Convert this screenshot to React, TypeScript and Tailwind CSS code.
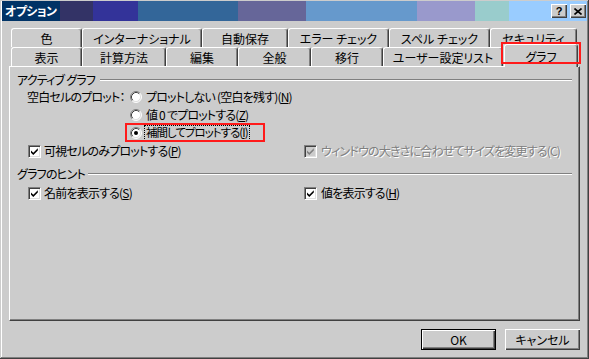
import React from "react";

const U = ({ c }: { c: string }) => <span className="underline underline-offset-1">{c}</span>;

function Radio({ checked }: { checked?: boolean }) {
  return (
    <svg width="12" height="12" viewBox="0 0 12 12" className="shrink-0">
      <circle cx="6" cy="6" r="5" fill="#ffffff" />
      <path d="M2.11 9.89 A5.5 5.5 0 0 1 9.89 2.11" stroke="#808080" fill="none" />
      <path d="M2.82 9.18 A4.5 4.5 0 0 1 9.18 2.82" stroke="#404040" fill="none" />
      <path d="M9.89 2.11 A5.5 5.5 0 0 1 2.11 9.89" stroke="#ffffff" fill="none" />
      <path d="M9.18 2.82 A4.5 4.5 0 0 1 2.82 9.18" stroke="#dfdfdf" fill="none" />
      {checked && <circle cx="6" cy="6" r="2" fill="#000000" />}
    </svg>
  );
}

function Check({ disabled }: { disabled?: boolean }) {
  return (
    <div
      className={
        "w-[13px] h-[13px] shrink-0 flex items-center justify-center border border-t-[#808080] border-l-[#808080] border-r-white border-b-white shadow-[inset_1px_1px_#404040,inset_-1px_-1px_#dfdfdf] " +
        (disabled ? "bg-[#cccccc]" : "bg-white")
      }
    >
      <svg width="9" height="9" viewBox="0 0 9 9">
        <polygon
          points="1,3.5 3.3,5.8 7.8,1.3 7.8,3.5 3.3,8 1,5.7"
          fill={disabled ? "#808080" : "#000000"}
        />
      </svg>
    </div>
  );
}

function Tab({ w, label }: { w: string; label: string }) {
  return (
    <div
      className={
        w +
        " h-full shrink-0 flex items-center justify-center border-l border-t border-white border-r border-r-[#404040] rounded-t-[3px] shadow-[inset_-1px_0_#808080] bg-[#cccccc]"
      }
    >
      <span className="pt-[1px]">{label}</span>
    </div>
  );
}

function GroupHeader({ label, mt, gap }: { label: string; mt: string; gap: string }) {
  return (
    <div className={mt + " h-[14px] flex items-center"}>
      <span>{label}</span>
      <div className={gap + " flex-1 h-[2px] border-t border-t-[#808080] border-b border-b-white"} />
    </div>
  );
}

function Btn({ children, def }: { children: React.ReactNode; def?: boolean }) {
  return (
    <div
      className={
        "w-[75px] h-[21px] flex items-center justify-center bg-[#cccccc] " +
        (def
          ? "border border-black shadow-[inset_1px_1px_#ffffff,inset_-1px_-1px_#404040,inset_-2px_-2px_#808080]"
          : "shadow-[inset_1px_1px_#ffffff,inset_-1px_-1px_#404040,inset_-2px_-2px_#808080]")
      }
    >
      {children}
    </div>
  );
}

export default function App() {
  return (
    <div className="w-[589px] h-[359px] bg-[#cccccc] flex flex-col pt-[1px] px-[2px] text-[12px] leading-none text-black whitespace-nowrap tracking-[-0.8px] font-['Noto_Sans_CJK_JP','Noto_Sans_CJK_SC',sans-serif] [font-feature-settings:'palt'] shadow-[inset_-1px_-1px_#404040,inset_1px_1px_#cccccc,inset_-2px_-2px_#808080,inset_2px_2px_#ffffff]">
      {/* Title bar */}
      <div className="h-[20px] flex items-center justify-between pl-[3px] pr-[1px] bg-[linear-gradient(to_right,#003366_58px,#333366_58px,#333366_91px,#333399_91px,#333399_136px,#336699_136px,#336699_236px,#666699_236px,#666699_304px,#6699cc_304px,#6699cc_415px,#9999cc_415px,#9999cc_473px,#99cccc_473px,#99cccc_507px,#99ccff_507px)]">
        <span className="text-white font-bold text-[12px] tracking-[-0.6px]">オプション</span>
        <div className="flex gap-[3px]">
          <div className="w-[16px] h-[14px] bg-[#cccccc] flex items-center justify-center shadow-[inset_1px_1px_#ffffff,inset_-1px_-1px_#404040,inset_-2px_-2px_#808080] font-['Liberation_Sans',sans-serif] font-bold text-[11px] tracking-normal">
            ?
          </div>
          <div className="w-[16px] h-[14px] bg-[#cccccc] flex items-center justify-center shadow-[inset_1px_1px_#ffffff,inset_-1px_-1px_#404040,inset_-2px_-2px_#808080]">
            <svg width="8" height="7" viewBox="0 0 8 7">
              <path d="M0.5 0.5 L7.5 6.5 M7.5 0.5 L0.5 6.5" stroke="#000" strokeWidth="1.6" />
            </svg>
          </div>
        </div>
      </div>

      {/* Tabs */}
      <div className="mt-[7px] ml-[9px] flex flex-col tracking-normal">
        <div className="h-[19px] flex">
          <Tab w="w-[71px]" label="色" />
          <Tab w="w-[120px]" label="インターナショナル" />
          <Tab w="w-[86px]" label="自動保存" />
          <Tab w="w-[101px]" label="エラー チェック" />
          <Tab w="w-[101px]" label="スペル チェック" />
          <Tab w="w-[87px]" label="セキュリティ" />
        </div>
        <div className="h-[19px] flex items-end">
          <Tab w="w-[71px]" label="表示" />
          <Tab w="w-[84px]" label="計算方法" />
          <Tab w="w-[72px]" label="編集" />
          <Tab w="w-[73px]" label="全般" />
          <Tab w="w-[72px]" label="移行" />
          <Tab w="w-[120px]" label="ユーザー設定リスト" />
          <div className="relative z-10 -mb-[1px] ml-[1px] w-[74px] h-[23px] shrink-0 flex items-center justify-center border-l border-t border-white border-r border-r-[#404040] rounded-t-[3px] shadow-[inset_-1px_0_#808080] bg-[#cccccc]">
            <span className="pt-[1px]">グラフ</span>
            <div className="absolute left-[-4px] top-[-3px] w-[80px] h-[22px] border-2 border-[#ff1a1a]" />
          </div>
        </div>
      </div>

      {/* Panel */}
      <div className="ml-[7px] w-[571px] h-[255px] border-l border-t border-white border-r border-b border-r-[#404040] border-b-[#404040] shadow-[inset_-1px_-1px_#808080] flex flex-col pl-[7px] pr-[7px]">
        <GroupHeader label="アクティブ グラフ" mt="mt-[6px]" gap="ml-[5px]" />
        <div className="mt-[1px] pl-[10px] flex">
          <div className="w-[103px] h-[18px] flex items-center">空白セルのプロット：</div>
          <div className="flex flex-col">
            <div className="h-[18px] flex items-center gap-[4px]">
              <Radio />
              <span>
                プロットしない (空白を残す)(<U c="N" />)
              </span>
            </div>
            <div className="h-[18px] flex items-center gap-[4px]">
              <Radio />
              <span>
                値 0 でプロットする(<U c="Z" />)
              </span>
            </div>
            <div className="relative h-[18px] flex items-center gap-[2px]">
              <Radio checked />
              <span className="border border-dotted border-black px-[1px] py-[1px] text-[11.5px] tracking-[-1px]">
                補間してプロットする(<U c="I" />)
              </span>
              <div className="absolute left-[-5px] top-[-1px] w-[140px] h-[19px] border-2 border-[#ff1a1a]" />
            </div>
          </div>
        </div>
        <div className="mt-[1px] h-[16px] flex items-center pl-[11px]">
          <div className="w-[276px] flex items-center gap-[3px]">
            <Check />
            <span>
              可視セルのみプロットする(<U c="P" />)
            </span>
          </div>
          <div className="flex items-center gap-[4px] text-[#808080] [text-shadow:1px_1px_#ffffff]">
            <Check disabled />
            <span>ウィンドウの大きさに合わせてサイズを変更する(C)</span>
          </div>
        </div>
        <GroupHeader label="グラフのヒント" mt="mt-[8px]" gap="ml-[3px]" />
        <div className="mt-[4px] h-[16px] flex items-center pl-[11px]">
          <div className="w-[276px] flex items-center gap-[3px]">
            <Check />
            <span>
              名前を表示する(<U c="S" />)
            </span>
          </div>
          <div className="flex items-center gap-[4px]">
            <Check />
            <span>
              値を表示する(<U c="H" />)
            </span>
          </div>
        </div>
      </div>

      {/* Buttons */}
      <div className="mt-[8px] flex justify-end gap-[9px] mr-[7px] tracking-normal">
        <Btn def>OK</Btn>
        <Btn>キャンセル</Btn>
      </div>
    </div>
  );
}
